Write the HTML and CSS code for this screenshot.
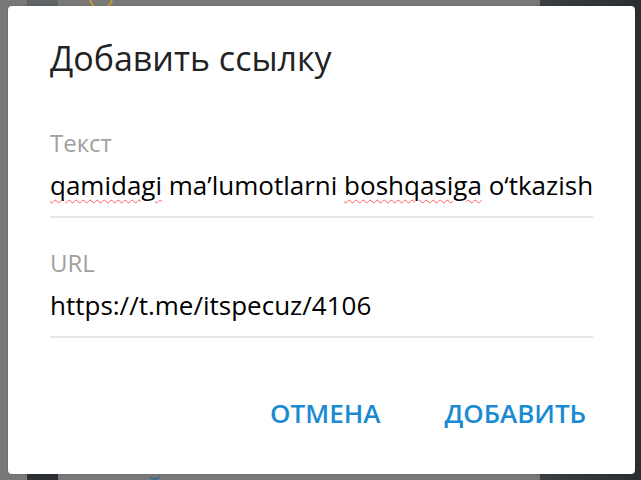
FILE: index.html
```html
<!DOCTYPE html>
<html lang="ru">
<head>
<meta charset="utf-8">
<title>Добавить ссылку</title>
<link rel="stylesheet" href="styles.css">
</head>
<body>
<div class="backdrop">
  <div class="bg-left"></div>
  <div class="bg-right"></div>
  <div class="bg-block bg-block-top"></div>
  <div class="bg-block bg-block-bottom"></div>
  <div class="bg-ring"></div>
  <div class="bg-arc"></div>
  <div class="dialog">
    <h1 class="title">Добавить ссылку</h1>
    <div class="field">
      <div class="label">Текст</div>
      <div class="value"><span class="typo">qamidagi</span> ma’lumotlarni <span class="typo">boshqasiga</span> o‘tkazish</div>
    </div>
    <div class="field">
      <div class="label">URL</div>
      <div class="value">https://t.me/itspecuz/4106</div>
    </div>
    <div class="actions">
      <button class="btn">ОТМЕНА</button>
      <button class="btn">ДОБАВИТЬ</button>
    </div>
  </div>
</div>
</body>
</html>
```

FILE: styles.css
```css
html, body {
  margin: 0;
  padding: 0;
  width: 641px;
  height: 480px;
  overflow: hidden;
}
body {
  font-family: "Open Sans", "Noto Sans", sans-serif;
}
.backdrop {
  position: relative;
  width: 641px;
  height: 480px;
  padding: 6px 8px 6px 8px;
  box-sizing: border-box;
  display: flex;
  background: #777777;
}
.bg-left {
  position: absolute;
  left: 0; top: 0; bottom: 0;
  width: 540px;
  background: #787878;
}
.bg-right {
  position: absolute;
  left: 540px; top: 0; bottom: 0; right: 0;
  background: linear-gradient(90deg, #3a3f42, #2a2e33);
}
.bg-block {
  position: absolute;
  left: 27px;
  width: 31px;
  height: 8px;
}
.bg-block-top { top: 0; background: #5f6566; }
.bg-block-bottom { bottom: 0; background: #2c3034; }
.bg-ring {
  position: absolute;
  left: 89px;
  top: -14px;
  width: 20px;
  height: 20px;
  border: 2px solid #c99a2e;
  border-radius: 50%;
}
.bg-arc {
  position: absolute;
  left: 148px;
  top: 466px;
  width: 10px;
  height: 10px;
  border: 2px solid transparent;
  border-bottom-color: #2f6d99;
  border-radius: 50%;
}
.dialog {
  position: relative;
  flex: 1;
  background: #ffffff;
  border-radius: 4px;
  padding: 32px 42px 0 42px;
  box-sizing: border-box;
  display: flex;
  flex-direction: column;
  box-shadow: 0 0 2px rgba(0,0,0,0.25);
}
.title {
  margin: 0;
  font-size: 34px;
  font-weight: 400;
  color: #222222;
  line-height: 40px;
}
.field {
  margin-top: 51px;
  border-bottom: 2px solid #e6e6e6;
  padding-bottom: 15px;
}
.field + .field {
  margin-top: 31px;
}
.label {
  font-size: 24px;
  color: #a0a0a0;
  line-height: 28px;
}
.value {
  margin-top: 12px;
  font-size: 26px;
  color: #000000;
  line-height: 32px;
  white-space: nowrap;
}
.typo {
  text-decoration: underline wavy #ff5a5a;
  text-decoration-thickness: 1px;
  text-underline-offset: 4px;
}
.actions {
  display: flex;
  justify-content: flex-end;
  gap: 64px;
  margin-top: 59px;
  padding-right: 7px;
}
.btn {
  border: 0;
  background: none;
  padding: 0;
  font-family: inherit;
  font-size: 26px;
  font-weight: 600;
  color: #1a8ad2;
  line-height: 32px;
}
```
